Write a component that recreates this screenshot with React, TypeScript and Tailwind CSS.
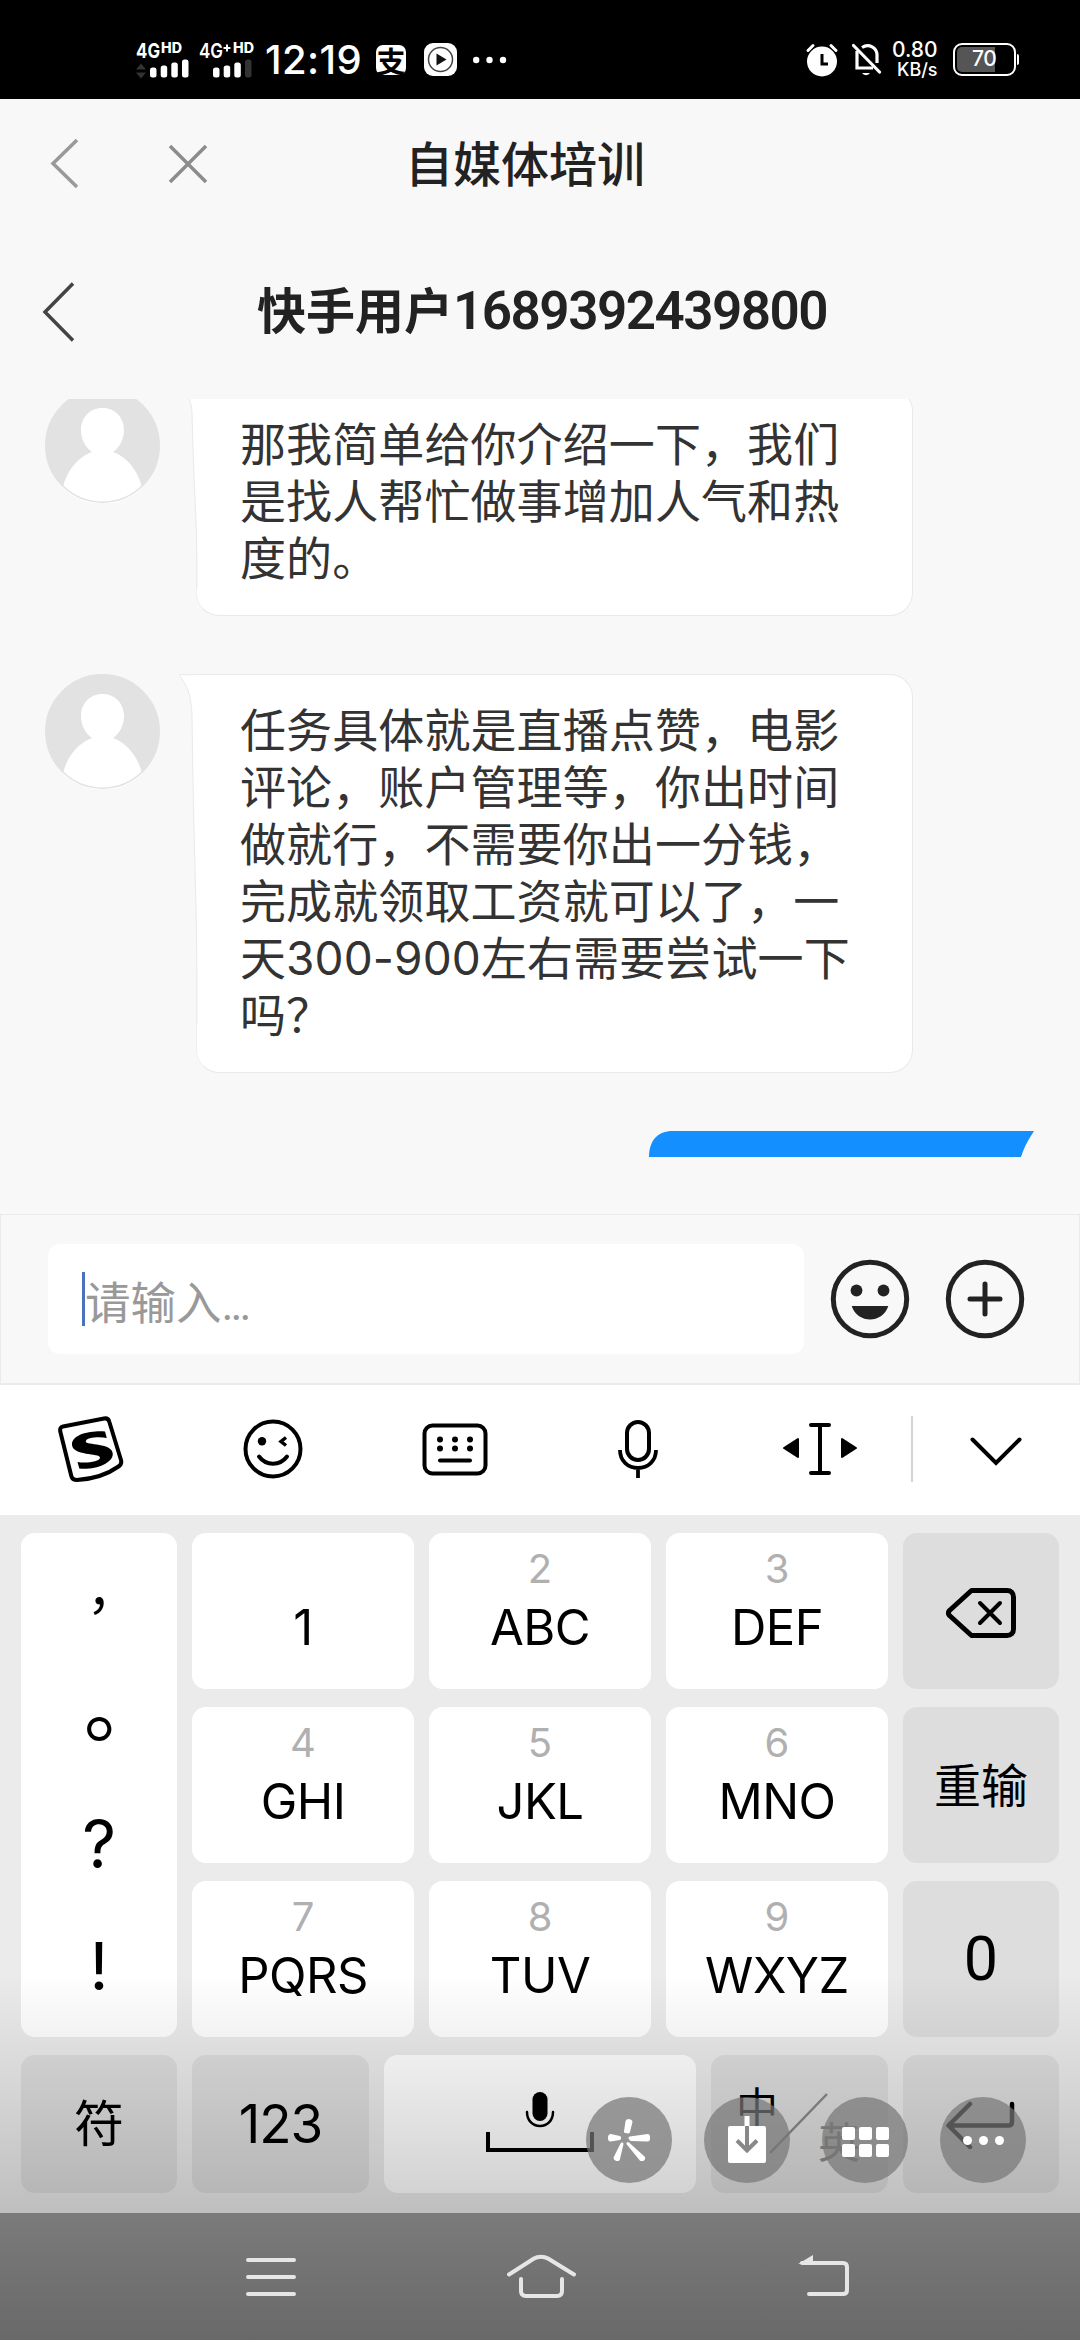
import type { ReactNode } from "react";

const letterKeys = [
  [
    { hint: "", label: "1" },
    { hint: "2", label: "ABC" },
    { hint: "3", label: "DEF" },
  ],
  [
    { hint: "4", label: "GHI" },
    { hint: "5", label: "JKL" },
    { hint: "6", label: "MNO" },
  ],
  [
    { hint: "7", label: "PQRS" },
    { hint: "8", label: "TUV" },
    { hint: "9", label: "WXYZ" },
  ],
];

const messages = [
  ["那我简单给你介绍一下，我们", "是找人帮忙做事增加人气和热", "度的。"],
  [
    "任务具体就是直播点赞，电影",
    "评论，账户管理等，你出时间",
    "做就行，不需要你出一分钱，",
    "完成就领取工资就可以了，一",
    "天300-900左右需要尝试一下",
    "吗？",
  ],
];

const Signal = ({ plus, weak }: { plus?: boolean; weak?: boolean }) => (
  <svg className="overflow-visible" width="58" height="40" viewBox="0 0 58 40" fill="#fff" fontFamily="Inter">
    <text x="0" y="18" fontSize="20.5" fontWeight={plus ? 600 : 700} textLength="24" lengthAdjust="spacingAndGlyphs">
      4G
    </text>
    {plus && <path d="M24.500 8h7M28 4.500v7" stroke="#fff" strokeWidth="2" />}
    <text x={plus ? 34 : 25} y="13" fontSize="14" fontWeight="800" textLength="21" lengthAdjust="spacingAndGlyphs">
      HD
    </text>
    {!plus && <path d="M0 29.500l5-6 5 6zM0 32.500l5 6 5-6z" fill="#333" />}
    <rect x="14" y="27.500" width="6.500" height="10" rx="2.500" />
    <rect x="24.700" y="25.500" width="6.500" height="12" rx="2.500" />
    <rect x="35.300" y="22.500" width="6.500" height="15" rx="2.500" />
    <rect x="46" y="19.500" width="6.500" height="18" rx="2.500" fill={weak ? "#333" : "#fff"} />
  </svg>
);

const StatusBar = () => (
  <div className="flex h-[99px] items-center bg-black pt-5 pl-[136px] font-[Inter] text-white">
    <Signal />
    <div className="ml-[5px]">
      <Signal plus weak />
    </div>
    <span className="ml-[8px] w-[111px] text-[40px] leading-10 font-medium tracking-[0.4px]">12:19</span>
    <span className="flex h-[30px] w-[30px] items-center justify-center rounded-[7px] bg-white font-['Noto_Sans_CJK_SC'] text-[29px] leading-[30px] font-bold text-black">
      支
    </span>
    <svg className="ml-[18px]" width="33" height="33" viewBox="0 0 33 33">
      <rect width="33" height="33" rx="9" fill="#fff" />
      <circle cx="16.500" cy="16.500" r="12" fill="none" stroke="#444" strokeWidth="1.500" />
      <path d="M12.500 10.500v12l10-6z" fill="#111" />
    </svg>
    <svg className="ml-4" width="34" height="8" viewBox="0 0 34 8" fill="#fff">
      <circle cx="3.200" cy="4" r="3.200" />
      <circle cx="16.500" cy="4" r="3.200" />
      <circle cx="30" cy="4" r="3.200" />
    </svg>
    <svg className="ml-[298px]" width="34" height="34" viewBox="0 0 34 34">
      <circle cx="17" cy="18.500" r="15" fill="#fff" />
      <path d="M3 7.500l5-5M31 7.500l-5-5" stroke="#fff" strokeWidth="3" strokeLinecap="round" />
      <path d="M17 11v10h6" fill="none" stroke="#000" strokeWidth="3" />
    </svg>
    <svg className="ml-[13px]" width="30" height="34" viewBox="0 0 30 34" fill="none" stroke="#fff" strokeWidth="3.200">
      <path d="M5 8v17h16" />
      <path d="M10 4.500C17 0 25 5 25 12v8" />
      <path d="M1.500 2.500L27.500 29" strokeLinecap="round" />
      <path d="M10 30a4.500 4 0 0 0 8 0z" fill="#fff" stroke="none" />
    </svg>
    <div className="ml-[10px] w-[53px] font-medium">
      <div className="text-[21px] leading-[20px]">0.80</div>
      <div className="pl-[5px] text-[18px] leading-[20px]">KB/s</div>
    </div>
    <div className="ml-[8px] flex h-[33px] w-[63px] items-stretch rounded-[9px] border-[2.500px] border-white p-[2px]">
      <div className="relative w-[38px] rounded-l-[5px] bg-[#555]">
        <span className="absolute top-0 left-[15px] text-[21px] leading-[24px] font-medium tracking-[-0.5px]">70</span>
      </div>
    </div>
    <div className="ml-[1px] h-[11px] w-[2px] rounded-r bg-white" />
  </div>
);

const Avatar = () => (
  <svg className="shrink-0" width="115" height="115" viewBox="0 0 115 115">
    <circle cx="57.500" cy="57.500" r="57" fill="#e2e2e2" />
    <path
      d="M57.500 20c13 0 21.500 10 21.500 22 0 10-5 18-11 22 17 6 27 24 29 36a57 57 0 0 1-79 0c2-12 12-30 29-36-6-4-11-12-11-22 0-12 8.500-22 21-22z"
      fill="#fff"
    />
    <circle cx="57.500" cy="57.500" r="56.700" fill="none" stroke="#e2e2e2" strokeWidth="1.500" />
  </svg>
);

const Message = ({ lines }: { lines: string[] }) => (
  <div className="flex items-start">
    <Avatar />
    <div className="relative ml-[36px] w-[717px] rounded-[23px] rounded-tl-none border border-[#e9e9e9] border-l-[#f0f0f0] bg-white px-[43px] pt-[27px] pb-[28px]">
      {/* tail */}
      <svg className="absolute -top-px -left-[18px] h-[88%] w-[19px]" viewBox="0 0 19 100" preserveAspectRatio="none">
        <path d="M0 0.200C7 3 12 5 13 12 15 58 18 60 18 100H19V0.200z" fill="#fff" />
        <path
          d="M19 0.200H0C7 3 12 5 13 12 15 58 18 60 18 100"
          fill="none"
          stroke="#e9e9e9"
          strokeWidth="1"
          vectorEffect="non-scaling-stroke"
        />
      </svg>
      {lines.map((line) => (
        <p key={line} className="text-[46px] leading-[57px] tracking-[0.100px] whitespace-nowrap text-[#333]">
          {line}
        </p>
      ))}
    </div>
  </div>
);

const Key = ({ className = "", children }: { className?: string; children?: ReactNode }) => (
  <div className={`flex items-center justify-center rounded-[14px] ${className}`}>{children}</div>
);

const Toolbar = () => (
  <div className="flex h-[130px] items-center bg-white pb-[2px]">
    <div className="grid w-[911px] grid-cols-5 place-items-center">
      <svg width="66" height="66" viewBox="0 0 66 66" fill="none" stroke="#000" strokeWidth="4">
        <path d="M5 10.500L46 2.500c3-.6 4.500.5 5.200 3L63 44c.8 3-.2 5-2.500 6.500C50 58 35 63 19 64c-3 0-5-1-5.700-4L2.400 16c-.7-3 0-5 2.600-5.500z" strokeLinejoin="round" />
        <path
          d="M47 15.500l1.800 6.500c-8-1.500-21-.5-21 3.500 0 4 27 1 27 12.500 0 10-20 16.500-33.500 14.500L19.500 46c8 1.500 22.500 0 22.500-4.500C42 37 14 40 14 28.500 14 18 33 14.500 47 15.500z"
          fill="#000"
          stroke="none"
        />
      </svg>
      <svg width="60" height="60" viewBox="0 0 60 60" fill="none" stroke="#000" strokeWidth="4">
        <circle cx="30" cy="30" r="27.500" />
        <circle cx="19" cy="22.300" r="4.200" fill="#000" stroke="none" />
        <path d="M43 18.500l-5 4 5 4" strokeWidth="3.500" />
        <path d="M16 37.500c7 9.500 21 9.500 28 0" strokeLinecap="round" />
      </svg>
      <svg width="66" height="53" viewBox="0 0 66 53" fill="none" stroke="#000" strokeWidth="4">
        <rect x="2.500" y="2.500" width="61" height="48" rx="8" />
        <path d="M18 37.500h30" strokeLinecap="round" />
        <path d="M18 16.500h.01M33 16.500h.01M48 16.500h.01M18 25.500h.01M33 25.500h.01M48 25.500h.01" strokeWidth="6" strokeLinecap="round" />
      </svg>
      <svg width="40" height="60" viewBox="0 0 40 60" fill="none" stroke="#000" strokeWidth="4">
        <rect x="9" y="3" width="22" height="38" rx="11" />
        <path d="M2 31c0 11 8 18 18 18s18-7 18-18M20 49v10" strokeWidth="3.800" />
      </svg>
      <svg width="76" height="54" viewBox="0 0 76 54" fill="none" stroke="#000" strokeWidth="4">
        <path d="M29 3h18M29 51h18" strokeLinecap="round" />
        <path d="M38 3v48" />
        <path d="M16 17v18L2 26zM60 17v18l14-9z" fill="#000" strokeWidth="2" strokeLinejoin="round" />
      </svg>
    </div>
    <div className="h-[66px] w-[2px] bg-[#d4d4d4]" />
    <svg className="mt-[6px] ml-[57px]" width="52" height="30" viewBox="0 0 52 30" fill="none" stroke="#000" strokeWidth="4">
      <path d="M2.500 2.500L26 26 49.500 2.500" strokeLinecap="round" />
    </svg>
  </div>
);

const Keyboard = () => (
  <div className="relative h-[698px] bg-[#ebebeb] px-[21px] pt-[18px] font-[Inter,'Noto_Sans_CJK_SC',sans-serif] text-black">
    <div className="flex gap-[15px]">
      <div className="flex h-[504px] w-[156px] flex-col items-center rounded-[14px] bg-white pt-[17px]">
        <span className="h-[122px] font-['Noto_Sans_CJK_TC'] text-[52px] leading-[106px]">，</span>
        <span className="h-[112px] font-['Noto_Sans_CJK_TC'] text-[80px] leading-[105px]">。</span>
        <span className="h-[122px] text-[66px] leading-[120px]">?</span>
        <span className="h-[122px] text-[66px] leading-[120px]">!</span>
      </div>
      <div className="flex flex-col gap-[18px]">
        {letterKeys.map((row) => (
          <div key={row[0].label} className="flex gap-[15px]">
            {row.map((k) => (
              <div key={k.label} className="flex h-[156px] w-[222px] flex-col items-center rounded-[14px] bg-white pt-[11px]">
                <span className="h-[55px] text-[40px] leading-[50px] text-[#b0b0b0]">{k.hint}</span>
                <span className="text-[49px] leading-[58px] tracking-[-0.5px]">{k.label}</span>
              </div>
            ))}
          </div>
        ))}
      </div>
      <div className="flex flex-col gap-[18px]">
        <Key className="h-[156px] w-[156px] bg-[#ddd] pt-[4px]">
          <svg width="70" height="50" viewBox="0 0 70 50" fill="none" stroke="#000" strokeWidth="5" strokeLinejoin="round" strokeLinecap="round">
            <path d="M25.500 2.500H61c4 0 6.500 2.500 6.500 6.500v32c0 4-2.500 6.500-6.500 6.500H25.500L3.500 27.500c-1.300-1.500-1.300-3.500 0-5z" />
            <path d="M34 15l20 20M54 15L34 35" strokeWidth="4" />
          </svg>
        </Key>
        <Key className="h-[156px] w-[156px] bg-[#ddd] pt-[3px] text-[47px]">重输</Key>
        <Key className="h-[156px] w-[156px] bg-[#ddd] pt-[2px] font-[Roboto] text-[61px]">0</Key>
      </div>
    </div>
    <div className="mt-[18px] flex h-[138px] gap-[15px]">
      <Key className="w-[156px] bg-[#ddd] pt-px text-[50px]">符</Key>
      <Key className="w-[177px] bg-[#ddd] pt-[2px] text-[53px] tracking-[-1px]">123</Key>
      <Key className="w-[312px] bg-white">
        <svg width="110" height="64" viewBox="0 0 110 64" fill="none" stroke="#000" strokeWidth="4">
          <rect x="47.500" y="0" width="15" height="29" rx="7.500" fill="#000" stroke="none" />
          <path d="M42 20c0 8.500 5.500 14 13 14s13-5.500 13-14" strokeWidth="2.500" strokeLinecap="round" />
          <path d="M3 40v18h104V40" />
        </svg>
      </Key>
      <Key className="relative w-[177px] bg-[#ddd]">
        <span className="absolute top-[29px] left-[25px] text-[42px] leading-[48px]">中</span>
        <svg className="absolute top-[37px] left-[58px]" width="60" height="64" viewBox="0 0 60 64">
          <path d="M1 61L58 2" stroke="#888" strokeWidth="2.500" />
        </svg>
        <span className="absolute top-[64px] left-[107px] text-[42px] leading-[48px] text-[#888]">英</span>
      </Key>
      <Key className="w-[156px] bg-[#ddd] pt-[2px]">
        <svg width="70" height="48" viewBox="0 0 70 48" fill="none" stroke="#000" strokeWidth="4.500" strokeLinecap="round" strokeLinejoin="round">
          <path d="M66 3v18c0 2.500-1 3.500-3.500 3.500H3M24 3L2.500 24.500 24 46" />
        </svg>
      </Key>
    </div>
    <div className="absolute inset-x-0 bottom-0 h-[240px] bg-linear-to-b from-black/0 to-black/19" />
    <FloatingActions />
  </div>
);

const Bubble = ({ children }: { children: ReactNode }) => (
  <div className="flex h-[86px] w-[86px] items-center justify-center rounded-full bg-[#777]/71">{children}</div>
);

const FloatingActions = () => (
  <div className="absolute top-[582px] left-[586px] flex gap-8">
    <Bubble>
      <svg width="42" height="42" viewBox="0 0 42 42" fill="#fff" stroke="#fff" strokeWidth="3" strokeLinejoin="round">
        <path d="M17.500 12.500l1.500-10c.5-1.500 4-1 4 .5L20.500 13zM11.500 18.500l-9-2c-1.500 1-1.500 4 0 4.500l9-1.500zM22 19l18-2.500c1 1 1 3.500 0 4.500L23 20.500zM20 24.500l13 16c1.500.8 3-.5 2.500-2zM14 25l-7 14c0 1.500 3 2 3.500 1z" />
      </svg>
    </Bubble>
    <Bubble>
      <svg width="38" height="48" viewBox="0 0 38 48">
        <rect x="0" y="10" width="38" height="37" rx="2" fill="#fff" />
        <path d="M19 0v10" stroke="#fff" strokeWidth="5" />
        <path d="M19 10v24M9 24.500l10 10 10-10" fill="none" stroke="#888" strokeWidth="4" />
      </svg>
    </Bubble>
    <Bubble>
      <div className="mt-[3px] grid grid-cols-3 gap-1">
        {[0, 1, 2, 3, 4, 5].map((i) => (
          <div key={i} className="h-[13px] w-[13px] rounded-[2px] bg-white" />
        ))}
      </div>
    </Bubble>
    <Bubble>
      <div className="flex gap-[7px]">
        <div className="h-[9px] w-[9px] rounded-full bg-white" />
        <div className="h-[9px] w-[9px] rounded-full bg-white" />
        <div className="h-[9px] w-[9px] rounded-full bg-white" />
      </div>
    </Bubble>
  </div>
);

const NavBar = () => (
  <div className="flex h-[127px] items-start bg-linear-to-b from-[#7b7b7b] to-[#696969] pt-[40px] pl-[246px]">
    <svg className="mt-[4px]" width="50" height="40" viewBox="0 0 50 40" stroke="#e6e6e6" strokeWidth="4" strokeLinecap="round">
      <path d="M2 3h46M2 20h46M2 37h46" />
    </svg>
    <svg className="ml-[209px]" width="72" height="46" viewBox="0 0 72 46" fill="none" stroke="#e6e6e6" strokeWidth="4" strokeLinecap="round">
      <path d="M4 21.500L29 5.500c4-2.500 10-2.500 14 0l26 16" />
      <path d="M16 26v12c0 3.500 1.500 5 5 5h31c3.500 0 5-1.500 5-5V26" />
    </svg>
    <svg className="ml-[221px]" width="52" height="46" viewBox="0 0 52 46" fill="none" stroke="#e6e6e6" strokeWidth="4" strokeLinecap="round">
      <path d="M4 10h41c2.500 0 4 1.500 4 4v23c0 2.500-1.500 4-4 4H11" />
      <path d="M0 11L15 2v8z" fill="#e6e6e6" stroke="none" />
    </svg>
  </div>
);

const App = () => {
  return (
    <div className="flex h-[2340px] w-[1080px] flex-col overflow-hidden bg-[#f8f8f8] font-[Inter,'Noto_Sans_CJK_SC',sans-serif]">
      <StatusBar />

      <div className="flex h-[129px] items-center">
        <svg className="ml-[50px]" width="30" height="52" viewBox="0 0 30 52" fill="none" stroke="#999" strokeWidth="3.500">
          <path d="M27 2L3 25.500 27 49" />
        </svg>
        <svg className="ml-[88px]" width="40" height="40" viewBox="0 0 40 40" stroke="#8c8c8c" strokeWidth="3.500">
          <path d="M2 2l36 36M38 2L2 38" />
        </svg>
        <h1 className="ml-[197px] pt-[2px] text-[48px] leading-[60px] font-medium text-[#222]">自媒体培训</h1>
      </div>

      <div className="flex h-[171px] items-start">
        <svg className="mt-[54px] ml-[42px]" width="34" height="60" viewBox="0 0 34 60" fill="none" stroke="#444" strokeWidth="3.500">
          <path d="M31 1.500L3 30l28 28.500" />
        </svg>
        <h2 className="mt-[53px] ml-[181px] text-[49px] leading-[60px] font-bold whitespace-nowrap text-[#222]">
          快手用户<span className="font-[Roboto] text-[53px] font-semibold tracking-[-1.500px]">1689392439800</span>
        </h2>
      </div>

      <div className="flex h-[759px] flex-col overflow-hidden">
        <div className="-mt-[11px] flex flex-col gap-[58px] pl-[45px]">
          {messages.map((lines) => (
            <Message key={lines[0]} lines={lines} />
          ))}
        </div>
        <svg className="mt-[58px] ml-[649px] shrink-0" width="386" height="26" viewBox="0 0 386 26">
          <path d="M0 26C0 10 8 0 24 0h361c-5 8-9 14-13 26z" fill="#148fff" />
        </svg>
      </div>

      <div className="mt-[56px] flex h-[171px] items-center border border-b-2 border-[#ebebeb] pl-[47px]">
        <div className="flex h-[110px] w-[756px] items-center rounded-[12px] bg-white pl-[34px]">
          <div className="h-[54px] w-[3px] bg-[#4a72c0]" />
          <span className="pt-[11px] font-[Roboto,'Noto_Sans_CJK_SC',sans-serif] text-[45.500px] leading-[60px] whitespace-nowrap text-[#999]">
            请输入<span className="tracking-[-3px]">...</span>
          </span>
        </div>
        <svg className="ml-[26px]" width="80" height="80" viewBox="0 0 80 80" fill="none" stroke="#222" strokeWidth="5">
          <circle cx="40" cy="40" r="36.700" />
          <circle cx="26.500" cy="31.500" r="5.900" fill="#222" stroke="none" />
          <circle cx="53.500" cy="31.500" r="5.900" fill="#222" stroke="none" />
          <path d="M21.700 47h36.600c-6 18-30.600 18-36.600 0z" fill="#222" stroke="none" />
        </svg>
        <svg className="ml-[35px]" width="80" height="80" viewBox="0 0 80 80" fill="none" stroke="#222" strokeWidth="5">
          <circle cx="40" cy="40" r="36.700" />
          <path d="M25 40h30M40 25v30" strokeLinecap="round" />
        </svg>
      </div>

      <Toolbar />
      <Keyboard />
      <NavBar />
    </div>
  );
};

export default App;
